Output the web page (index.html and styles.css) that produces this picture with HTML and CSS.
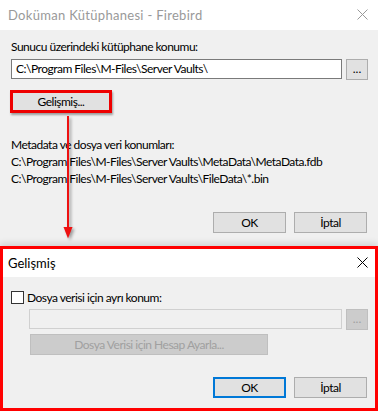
FILE: index.html
```html
<!DOCTYPE html>
<html lang="tr">
<head>
<meta charset="utf-8">
<title>Doküman Kütüphanesi - Firebird</title>
<link rel="stylesheet" href="styles.css">
</head>
<body>
<div class="screen">
  <section class="dlg dlg-main">
    <header class="titlebar inactive">
      <span class="title title-wide">Doküman Kütüphanesi - Firebird</span>
      <svg class="close" width="11" height="11" viewBox="0 0 11 11"><path d="M0.5 0.5 L10.5 10.5 M10.5 0.5 L0.5 10.5" stroke="currentColor" stroke-width="1" fill="none"/></svg>
    </header>
    <div class="body">
      <div class="label">Sunucu üzerindeki kütüphane konumu:</div>
      <div class="row path-row">
        <div class="field">C:\Program Files\M-Files\Server Vaults\</div>
        <button class="btn dots">...</button>
      </div>
      <div class="row adv-row">
        <button class="btn adv">Gelişmiş...</button>
      </div>
      <div class="label meta-label">Metadata ve dosya veri konumları:</div>
      <div class="path">C:\Program Files\M-Files\Server Vaults\MetaData\MetaData.fdb</div>
      <div class="path">C:\Program Files\M-Files\Server Vaults\FileData\*.bin</div>
      <div class="actions">
        <button class="btn act">OK</button>
        <button class="btn act">İptal</button>
      </div>
    </div>
  </section>

  <section class="dlg dlg-adv">
    <header class="titlebar">
      <span class="title">Gelişmiş</span>
      <svg class="close" width="11" height="11" viewBox="0 0 11 11"><path d="M0.5 0.5 L10.5 10.5 M10.5 0.5 L0.5 10.5" stroke="currentColor" stroke-width="1" fill="none"/></svg>
    </header>
    <div class="body">
      <label class="check-row"><span class="checkbox"></span><span>Dosya verisi için ayrı konum:</span></label>
      <div class="indent">
        <div class="row path-row2">
          <div class="field disabled"></div>
          <button class="btn dots disabled">...</button>
        </div>
        <button class="btn wide disabled">Dosya Verisi için Hesap Ayarla...</button>
      </div>
      <div class="actions actions2">
        <button class="btn act default">OK</button>
        <button class="btn act">İptal</button>
      </div>
    </div>
  </section>

  <div class="arrow">
    <span class="shaft"></span>
    <svg class="head" width="10" height="12" viewBox="0 0 10 12"><path d="M0.5 0 L9.5 0 L5 11.5 Z" fill="#ee1111"/></svg>
  </div>
</div>
</body>
</html>
```
FILE: styles.css
```css
html, body {
  margin: 0;
  padding: 0;
}
body {
  background: #f0f0f0;
  font-family: Lato, "Noto Sans", sans-serif;
  font-size: 12px;
  letter-spacing: -0.5px;
  color: #000;
}
.screen {
  position: relative;
  width: 378px;
  height: 411px;
  overflow: hidden;
  background: #f0f0f0;
}
.dlg {
  background: #f0f0f0;
}
.dlg-main {
  height: 246px;
}
.titlebar {
  height: 30px;
  background: #fff;
  display: flex;
  align-items: center;
  justify-content: space-between;
  padding: 0 10px 0 8px;
  box-sizing: border-box;
  color: #000;
}
.titlebar.inactive {
  color: #999;
}
.titlebar .title {
  font-size: 13px;
  line-height: 16px;
  letter-spacing: 0;
}
.titlebar .title-wide {
  letter-spacing: 0.3px;
}
.close {
  display: block;
  margin-top: -1px;
}
.body {
  padding: 0 11px;
}
.dlg-main .body {
  padding-top: 9px;
}
.label {
  line-height: 15px;
  height: 15px;
}
.row {
  display: flex;
  gap: 4px;
}
.path-row {
  margin-top: 5px;
  height: 21px;
}
.field {
  flex: 1;
  height: 20px;
  box-sizing: border-box;
  border: 1px solid #7a7a7a;
  background: #fff;
  line-height: 18px;
  padding-left: 4px;
  white-space: nowrap;
  overflow: hidden;
}
.field.disabled {
  background: #f0f0f0;
  border-color: #d0d0d0;
}
.btn {
  font: inherit;
  letter-spacing: inherit;
  color: #000;
  background: #e1e1e1;
  border: 1px solid #adadad;
  box-sizing: border-box;
  padding: 0;
  margin: 0;
  line-height: 17px;
}
.dots {
  width: 22px;
  height: 21px;
  margin-right: -1px;
  padding-bottom: 2px;
  letter-spacing: 0;
}
.btn.disabled {
  background: #cccccc;
  border-color: #bfbfbf;
  color: #a0a0a0;
}
.adv-row {
  margin-top: 10px;
  margin-left: -1px;
}
.adv {
  width: 102px;
  height: 23px;
  border: 3px solid #ee0000;
  box-shadow: 1px 2px 2px rgba(0,0,0,0.35);
}
.meta-label {
  margin-top: 24px;
}
.path {
  margin-top: 2px;
  line-height: 15px;
  white-space: nowrap;
}
.actions {
  display: flex;
  justify-content: flex-end;
  gap: 8px;
  margin-top: 26px;
}
.act {
  width: 73px;
  height: 21px;
}
.act.default {
  border: 2px solid #0078d7;
}

.dlg-adv {
  position: relative;
  height: 165px;
  box-sizing: border-box;
  border: 3px solid #ff0000;
  box-shadow: 0 -3px 6px rgba(0,0,0,0.12);
}
.dlg-adv .titlebar {
  height: 28px;
  padding: 0 7px 0 5px;
}
.dlg-adv .body {
  padding: 13px 8px 0 8px;
}
.check-row {
  display: flex;
  align-items: center;
  gap: 3px;
  height: 14px;
}
.checkbox {
  width: 13px;
  height: 13px;
  box-sizing: border-box;
  border: 1px solid #333;
  background: #fff;
}
.indent {
  padding-left: 18px;
}
.path-row2 {
  margin-top: 5px;
  height: 21px;
}
.wide {
  display: block;
  margin-top: 4px;
  margin-left: 1px;
  width: 238px;
  height: 21px;
}
.actions2 {
  margin-top: 22px;
}

.arrow {
  position: absolute;
  left: 63px;
  top: 116px;
  width: 10px;
  height: 123px;
  filter: drop-shadow(2px 2px 1.5px rgba(0,0,0,0.35));
}
.shaft {
  position: absolute;
  left: 4px;
  top: 0;
  width: 2px;
  height: 112px;
  background: #ee1111;
}
.head {
  position: absolute;
  left: 0;
  top: 111px;
}
```
